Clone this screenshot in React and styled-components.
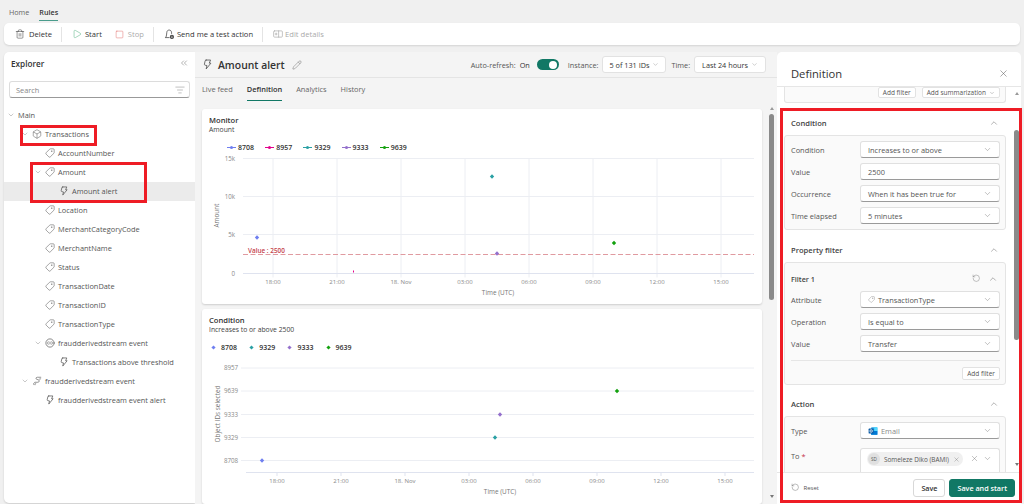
import React from "react";
import styled, {createGlobalStyle} from "styled-components";
import {Trash2, Play, Square, Pencil, Tag, ChevronDown, ChevronUp, X, ChevronsLeft, ListFilter, RotateCcw, Box} from "lucide-react";

const GlobalStyle = createGlobalStyle`
  html, body {
    margin: 0;
    padding: 0;
    height: 504px;
    overflow: hidden;
    background: #f0f0f0;
    font-family: "Open Sans", "Noto Sans", sans-serif;
    color: #333;
  }
`;

const Page = styled.div`
  position: relative;
  width: 1024px;
  height: 504px;
  overflow: hidden;
  display: flex;
  flex-direction: column;
`;

const TopTabs = styled.div`
  display: flex;
  gap: 10px;
  height: 23px;
  padding: 5px 0 0 9px;
  box-sizing: border-box;
  font-size: 7.2px;
`;

const TopTab = styled.div`
  height: 16px;
  line-height: 14px;
  box-sizing: border-box;
  color: ${p => (p.$active ? "#333" : "#666")};
  font-weight: ${p => (p.$active ? 600 : 400)};
  border-bottom: ${p => (p.$active ? "1.5px solid #4a9c8c" : "none")};
`;

const Toolbar = styled.div`
  margin: 0 4px;
  height: 22px;
  background: #fff;
  border-radius: 5px;
  display: flex;
  align-items: center;
  padding-left: 11px;
  font-size: 7.6px;
  box-shadow: 0 1px 2px rgba(0, 0, 0, 0.12);
`;

const ToolButton = styled.div`
  display: flex;
  align-items: center;
  gap: ${p => p.$iconGap || 3}px;
  margin-right: ${p => p.$gap || 0}px;
  color: ${p => (p.$disabled ? "#aaa" : "#333")};
  font-weight: 500;
`;

const ToolDivider = styled.div`
  width: 1px;
  height: 15px;
  background: #e4e4e4;
  margin: 0 10px 0 9px;
`;

const Workspace = styled.div`
  flex: 1;
  display: flex;
  margin: 7px 3px 0 4px;
  min-height: 0;
`;

const Explorer = styled.div`
  width: 191px;
  background: #fff;
  border-radius: 5px 0 0 5px;
  box-shadow: 0 1px 2px rgba(0, 0, 0, 0.15);
  margin-bottom: 1px;
  flex-shrink: 0;
`;

const ExplorerHead = styled.div`
  display: flex;
  justify-content: space-between;
  align-items: center;
  height: 22px;
  padding: 0 6px 0 7px;
  font-size: 8.2px;
  font-weight: 600;
`;

const SearchBox = styled.div`
  margin: 7px 5px 0;
  height: 17px;
  border: 1px solid #dcdcdc;
  border-bottom-color: #999;
  border-radius: 3px;
  box-sizing: border-box;
  display: flex;
  justify-content: space-between;
  align-items: center;
  padding: 0 4px 0 6px;
  font-size: 7.4px;
  color: #888;
`;

const Tree = styled.div`
  margin-top: 7.5px;
  display: flex;
  flex-direction: column;
`;

const TreeRow = styled.div`
  height: 19px;
  display: flex;
  align-items: center;
  padding-left: ${p => p.$indent}px;
  gap: 3px;
  font-size: 7.4px;
  color: #555;
  background: ${p => (p.$selected ? "#ebebeb" : "transparent")};
  white-space: nowrap;
`;

const TreeChevron = styled.span`
  display: inline-flex;
  width: 8px;
  color: #777;
`;

const Main = styled.div`
  width: 582px;
  display: flex;
  flex-direction: column;
  flex-shrink: 0;
  background: #f4f4f4;
`;

const MainHead = styled.div`
  height: 25px;
  border-bottom: 1px solid #e4e4e4;
  display: flex;
  align-items: center;
  padding: 0 11px 0 7px;
  font-size: 7.3px;
`;

const AlertTitle = styled.div`
  font-size: 10.4px;
  font-weight: 600;
  margin: 0 7px 0 5px;
  color: #333;
`;

const HeadRight = styled.div`
  margin-left: auto;
  display: flex;
  align-items: center;
  color: #555;
`;

const OnLabel = styled.span`
  font-weight: 500;
  color: #333;
  margin-left: 4px;
`;

const Toggle = styled.div`
  width: 22px;
  height: 11px;
  border-radius: 6px;
  background: #117865;
  margin: 0 9px 0 7px;
  display: flex;
  justify-content: flex-end;
  align-items: center;
  padding-right: 1.5px;
  box-sizing: border-box;
`;

const ToggleKnob = styled.div`
  width: 8px;
  height: 8px;
  border-radius: 50%;
  background: #fff;
`;

const HeadSelect = styled.div`
  height: 17px;
  padding: 0 ${p => (p.$last ? 7 : 6)}px;
  margin: 0 ${p => (p.$last ? 0 : 5)}px 0 4px;
  display: flex;
  align-items: center;
  gap: 3px;
  background: #fff;
  border: 1px solid #e2e2e2;
  border-radius: 3px;
  box-sizing: border-box;
  font-weight: 500;
  color: #333;
`;

const MainTabs = styled.div`
  display: flex;
  gap: 14px;
  height: 26px;
  padding: 3px 0 0 7px;
  box-sizing: border-box;
  font-size: 7.4px;
`;

const MainTab = styled.div`
  height: 20px;
  line-height: 17px;
  box-sizing: border-box;
  color: ${p => (p.$active ? "#333" : "#666")};
  font-weight: ${p => (p.$active ? 600 : 400)};
  border-bottom: ${p => (p.$active ? "1.5px solid #117865" : "none")};
`;

const ChartArea = styled.div`
  display: flex;
  flex: 1;
  min-height: 0;
  padding: 5px 0 0 7px;
  gap: 7px;
`;

const Cards = styled.div`
  width: 560px;
  display: flex;
  flex-direction: column;
  gap: 5px;
`;

const Card = styled.div`
  flex: 1;
  background: #fff;
  border-radius: 3px;
  box-shadow: 0 1px 2px rgba(0, 0, 0, 0.16);
  padding: 6px 0 0 7px;
  box-sizing: border-box;
  min-height: 0;
  overflow: hidden;
`;

const CardTitle = styled.div`
  font-size: 7.6px;
  font-weight: 600;
  line-height: 10px;
  color: #333;
`;

const CardSub = styled.div`
  font-size: 6.8px;
  line-height: 10px;
  color: #444;
`;

const Legend = styled.div`
  display: flex;
  margin: 7.5px 0 0 ${p => p.$offset}px;
  height: 10px;
`;

const LegendItem = styled.div`
  width: 38.2px;
  display: flex;
  align-items: center;
  gap: ${p => (p.$dot ? "6px" : "2px")};
  font-size: 7px;
  font-weight: 600;
  color: #333;
`;

const LegendDot = styled.span`
  display: inline-block;
  width: 3px;
  height: 3px;
  transform: rotate(45deg);
  background: ${p => p.$color};
`;

const LegendLine = styled.span`
  position: relative;
  display: inline-block;
  width: 9px;
  height: 1px;
  background: ${p => p.$color};

  &::after {
    content: "";
    position: absolute;
    left: 3px;
    top: -1px;
    width: 3px;
    height: 3px;
    border-radius: 50%;
    background: ${p => p.$color};
  }
`;

const ChartSvg = styled.svg`
  display: block;
  margin-left: -7px;
  font-family: "Open Sans", "Noto Sans", sans-serif;
`;

const ScrollTrack = styled.div`
  position: relative;
  width: 5px;
  margin-top: -2px;
  margin-bottom: 6px;
`;

const PanelScroll = styled(ScrollTrack)`
  position: absolute;
  right: 2px;
  top: 5px;
  margin: 0;
  height: 374px;
`;

const ScrollThumb = styled.div`
  position: absolute;
  left: 0;
  right: 0;
  top: ${p => p.$top}px;
  height: ${p => p.$height}px;
  background: #8a8a8a;
  border-radius: 3px;
`;

const ScrollArrow = styled.div`
  position: absolute;
  left: 0.5px;
  ${p => (p.$down ? "bottom: 0;" : "top: 0;")}
  width: 0;
  height: 0;
  border-left: 2px solid transparent;
  border-right: 2px solid transparent;
  ${p => (p.$down ? "border-top: 3px solid #777;" : "border-bottom: 3px solid #999;")}
`;

const Panel = styled.div`
  flex: 1;
  background: #fff;
  border-radius: 5px 5px 0 0;
  display: flex;
  flex-direction: column;
  min-width: 0;
  overflow: hidden;
`;

const PanelHead = styled.div`
  height: 35px;
  flex-shrink: 0;
  border-bottom: 1px solid #e6e6e6;
  box-sizing: border-box;
  display: flex;
  justify-content: space-between;
  align-items: center;
  padding: 9px 12px 0 14px;
  font-size: 11.2px;
  font-weight: 500;
  color: #333;
`;

const PanelBody = styled.div`
  position: relative;
  flex: 1;
  min-height: 0;
  overflow: hidden;
  padding: 0 0 0 7px;
`;

const PanelFoot = styled.div`
  height: 32px;
  flex-shrink: 0;
  border-top: 1px solid #e6e6e6;
  box-sizing: border-box;
  display: flex;
  align-items: center;
  padding: 0 6px 2px 14px;
  gap: 4px;
`;

const ResetButton = styled.div`
  display: flex;
  align-items: center;
  gap: 4px;
  font-size: 6px;
  color: #555;
  margin-right: auto;
`;

const FootButton = styled.div`
  height: 18px;
  display: flex;
  align-items: center;
  justify-content: center;
  border-radius: 3px;
  box-sizing: border-box;
  font-size: 7.2px;
  font-weight: 600;
  padding: 0 7px;
  color: ${p => (p.$primary ? "#fff" : "#333")};
  background: ${p => (p.$primary ? "#117865" : "#fff")};
  border: 1px solid ${p => (p.$primary ? "#117865" : "#d8d8d8")};
`;

const Group = styled.div`
  width: 222px;
  box-sizing: border-box;
  background: #fafafa;
  border: 1px solid #e4e4e4;
  border-radius: 3px;
  padding: ${p => p.$padding || "5px 5px 5px 6px"};
  display: flex;
  flex-direction: column;
  gap: ${p => p.$gap || "5px"};
`;

const TopFragment = styled(Group)`
  height: 16px;
  border-top: none;
  border-radius: 0 0 3px 3px;
  padding: 0 5px 0 0;
  flex-direction: row;
  justify-content: flex-end;
  gap: 6px;
`;

const MiniButton = styled.div`
  height: ${p => p.$height || 11}px;
  padding: 0 4px;
  display: flex;
  align-items: center;
  gap: 3px;
  background: #fff;
  border: 1px solid #e2e2e2;
  border-radius: 2px;
  box-sizing: border-box;
  font-size: 6.5px;
  color: #555;
`;

const SectionHead = styled.div`
  height: ${p => p.$height}px;
  width: 222px;
  box-sizing: border-box;
  display: flex;
  justify-content: space-between;
  align-items: center;
  padding: ${p => p.$pad} 7px 0 7px;
  font-size: 7.6px;
  font-weight: 600;
  color: #444;
`;

const FieldRow = styled.div`
  display: flex;
  align-items: ${p => (p.$top ? "flex-start" : "center")};
  justify-content: space-between;
  font-size: 7.4px;
  color: #555;
`;

const FieldLabel = styled.span`
  color: #555;
  ${p => p.$top && "margin-top: 3px;"}
`;

const Required = styled.span`
  color: #c4314b;
`;

const Select = styled.div`
  width: 140px;
  height: ${p => p.$height || 17}px;
  background: #fff;
  border: 1px solid #e0e0e0;
  border-bottom-color: #9a9a9a;
  border-radius: 3px;
  box-sizing: border-box;
  display: flex;
  align-items: ${p => (p.$top ? "flex-start" : "center")};
  justify-content: space-between;
  padding: ${p => (p.$top ? "3px" : "0")} 7px 0;
  font-size: 7.4px;
  color: ${p => (p.$muted ? "#888" : "#555")};
`;

const SelectValue = styled.span`
  display: flex;
  align-items: center;
  gap: 3px;
`;

const FilterHead = styled.div`
  display: flex;
  justify-content: space-between;
  align-items: center;
  height: 15px;
  padding-right: 2px;
  font-size: 7.2px;
  font-weight: 600;
  color: #444;
`;

const FilterIcons = styled.div`
  display: flex;
  align-items: center;
  gap: 8px;
  color: #666;
`;

const Divider = styled.div`
  height: 1px;
  background: #e6e6e6;
  margin-top: 3px;
`;

const FilterFoot = styled.div`
  display: flex;
  justify-content: flex-end;
  margin-top: 1px;
`;

const Chip = styled.div`
  display: flex;
  align-items: center;
  gap: 4px;
  height: 14px;
  margin-left: -1px;
  padding: 0 3px 0 1px;
  background: #f0f0f0;
  border-radius: 7px;
  font-size: 6.4px;
  color: #555;
  white-space: nowrap;
`;

const Avatar = styled.span`
  width: 12px;
  height: 12px;
  border-radius: 50%;
  background: #e0e0e0;
  display: flex;
  align-items: center;
  justify-content: center;
  font-size: 4.6px;
  color: #555;
`;

const ToTools = styled.div`
  display: flex;
  align-items: center;
  gap: 4px;
  margin-top: 2px;
  color: #666;
`;

const MirrorTag = styled(Tag)`
  transform: scaleX(-1);
  flex-shrink: 0;
`;

const RedBox = styled.div`
  position: absolute;
  left: ${p => p.$x}px;
  top: ${p => p.$y}px;
  width: ${p => p.$w}px;
  height: ${p => p.$h}px;
  border: 3px solid #ee1c25;
  box-sizing: border-box;
  pointer-events: none;
`;

const AlertIcon = ({size = 10}) => (
  <svg width={size} height={size} viewBox="0 0 16 16" fill="none" stroke="#555" strokeWidth="1.2" strokeLinejoin="round" strokeLinecap="round">
    <path d="M6 1.500h6.500L10.500 6H13l-7 8.500L7.200 9.500 4.500 9C3.700 8.800 3.300 8.200 3.500 7.500l1-4.500C4.700 2 5.200 1.500 6 1.500z" />
  </svg>
);

const EventIcon = () => (
  <svg width="10" height="10" viewBox="0 0 16 16" fill="none" stroke="#555" strokeWidth="1.1" strokeLinecap="round">
    <circle cx="8" cy="8" r="6.600" />
    <path d="M5 6c-1 1.200-1 2.800 0 4M11 6c1 1.200 1 2.800 0 4M8 6.500v3" />
  </svg>
);

const StreamIcon = () => (
  <svg width="10" height="10" viewBox="0 0 16 16" fill="none" stroke="#666" strokeWidth="1.1" strokeLinecap="round">
    <path d="M14 2H8.500C6 2 5.500 5 8 5.500l2 .5c2.500.5 2 4-.5 4H6" />
    <path d="M12 5c.8 0 1.600-.2 2-.5M3 14c-1-2 0-4 2-4" />
    <path d="M5 14c-.6-1 0-2 1-2" />
  </svg>
);

const EditDetailsIcon = () => (
  <svg width="10" height="10" viewBox="0 0 16 16" fill="none" stroke="#aaa" strokeWidth="1.1" strokeLinecap="round">
    <rect x="1" y="3" width="14" height="10" rx="1.500" />
    <path d="M9 3v10M3.500 8h3M5 6.500v3" />
  </svg>
);

const TestIcon = () => (
  <svg width="11" height="11" viewBox="0 0 16 16" fill="none" stroke="#444" strokeWidth="1.1" strokeLinecap="round" strokeLinejoin="round">
    <path d="M3 11.500C3.600 9.500 4 8 4 5.500 4 3 5.500 1.500 7.500 1.500S11 3 11 5.500v1" />
    <path d="M2 12.500h5.500" />
    <circle cx="11.500" cy="11.500" r="2.300" strokeWidth="1.500" />
    <circle cx="11.500" cy="11.500" r=".6" fill="#444" />
  </svg>
);

const OutlookIcon = () => (
  <svg width="10" height="10" viewBox="0 0 16 16">
    <rect x="5" y="2" width="10" height="12" rx="1" fill="#28a8ea" />
    <rect x="10" y="2" width="5" height="6" fill="#50d9ff" />
    <rect x="5" y="8" width="10" height="6" fill="#0078d4" />
    <rect x="1" y="4" width="8" height="8" rx="1" fill="#0f5fa8" />
    <circle cx="5" cy="8" r="2" fill="none" stroke="#fff" strokeWidth="1.200" />
  </svg>
);

const SmallTag = () => <MirrorTag size={10} strokeWidth={1.3} color="#555" />;

const colors = {8708: "#6f7ff0", 8957: "#e3008c", 9329: "#2aa0a4", 9333: "#9470cc", 9639: "#13a10e"};

const hours = [
  ["18:00", 71], ["21:00", 135], ["18. Nov", 199], ["03:00", 263],
  ["06:00", 327], ["09:00", 391], ["12:00", 455], ["15:00", 519],
];

// small diamond used for the data points
const Marker = ({x, y, id}) => (
  <path d={`M${x} ${y - 2.2}L${x + 2.2} ${y}L${x} ${y + 2.2}L${x - 2.2} ${y}Z`} fill={colors[id]} />
);

const Monitor = () => (
  <ChartSvg width="559" height="150" viewBox="0 151.500 559 150">
    {[157, 195, 233].map(y => <line key={y} x1="41" x2="552" y1={y} y2={y} stroke="#eceef3" strokeWidth="1" />)}
    {hours.map(([h, x]) => <line key={h} x1={x} x2={x} y1="157" y2="276" stroke="#eceef3" strokeWidth="1" />)}
    <line x1="41" x2="552" y1="272" y2="272" stroke="#dfe3ef" strokeWidth="1" />
    <line x1="41" x2="552" y1="253" y2="253" stroke="#e09aa0" strokeWidth="1" strokeDasharray="5 2.500" />
    {[["15k", 159], ["10k", 197], ["5k", 235], ["0", 274]].map(([t, y]) => (
      <text key={t} x="33" y={y} fontSize="6.200" fill="#888" textAnchor="end">{t}</text>
    ))}
    <text transform="translate(17 214) rotate(-90)" fontSize="6.400" fill="#777" textAnchor="middle">Amount</text>
    {hours.map(([h, x]) => <text key={h} x={x} y="282.500" fontSize="6" fill="#888" textAnchor="middle">{h}</text>)}
    <text x="296" y="293.500" fontSize="6.400" fill="#777" textAnchor="middle">Time (UTC)</text>
    <text x="46" y="251" fontSize="6.400" fontWeight="600" fill="#c4414b">Value : 2500</text>
    <Marker x={55} y={236} id={8708} />
    <rect x="151" y="269" width="1" height="2" fill={colors[8957]} />
    <Marker x={290} y={175} id={9329} />
    <Marker x={295} y={252} id={9333} />
    <Marker x={412} y={241.5} id={9639} />
  </ChartSvg>
);

const ConditionChart = () => (
  <ChartSvg width="559" height="147" viewBox="0 352 559 147">
    {[[8957, 367], [9639, 390], [9333, 413.5], [9329, 436.5], [8708, 459.5]].map(([id, y]) => (
      <g key={id}>
        <line x1="39" x2="552" y1={y} y2={y} stroke="#eceef3" strokeWidth="1" />
        <text x="22" y={y + 2} fontSize="6.200" fill="#888">{id}</text>
      </g>
    ))}
    <line x1="44" x2="552" y1="471.500" y2="471.500" stroke="#dfe3ef" strokeWidth="1" />
    {hours.map(([h, x]) => <line key={h} x1={x + 4} x2={x + 4} y1="471.500" y2="475" stroke="#dfe3ef" strokeWidth="1" />)}
    {hours.map(([h, x]) => <text key={h} x={x + 4} y="482" fontSize="6" fill="#888" textAnchor="middle">{h}</text>)}
    <text x="298" y="493" fontSize="6.400" fill="#777" textAnchor="middle">Time (UTC)</text>
    <text transform="translate(17.500 413) rotate(-90)" fontSize="6.400" fill="#777" textAnchor="middle">Object IDs selected</text>
    <Marker x={60} y={459.5} id={8708} />
    <Marker x={293} y={436.5} id={9329} />
    <Marker x={298} y={413.5} id={9333} />
    <Marker x={415} y={390} id={9639} />
  </ChartSvg>
);

const Chevron = ({size = 9}) => <ChevronDown size={size} strokeWidth={1.2} color="#777" />;
const Up = ({size = 10}) => <ChevronUp size={size} strokeWidth={1.2} color="#666" />;

const treeRows = [
  {label: "Main", indent: 3, chevron: true},
  {label: "Transactions", indent: 17, chevron: true, icon: <Box size={10} strokeWidth={1.2} color="#555" />},
  {label: "AccountNumber", indent: 41, icon: <SmallTag />},
  {label: "Amount", indent: 30, chevron: true, icon: <SmallTag />},
  {label: "Amount alert", indent: 55, icon: <AlertIcon />, selected: true},
  {label: "Location", indent: 41, icon: <SmallTag />},
  {label: "MerchantCategoryCode", indent: 41, icon: <SmallTag />},
  {label: "MerchantName", indent: 41, icon: <SmallTag />},
  {label: "Status", indent: 41, icon: <SmallTag />},
  {label: "TransactionDate", indent: 41, icon: <SmallTag />},
  {label: "TransactionID", indent: 41, icon: <SmallTag />},
  {label: "TransactionType", indent: 41, icon: <SmallTag />},
  {label: "fraudderivedstream event", indent: 30, chevron: true, icon: <EventIcon />},
  {label: "Transactions above threshold", indent: 55, icon: <AlertIcon />},
  {label: "fraudderivedstream event", indent: 17, chevron: true, icon: <StreamIcon />},
  {label: "fraudderivedstream event alert", indent: 41, icon: <AlertIcon />},
];

const App = () => {
  return (
    <Page>
      <GlobalStyle />
      <TopTabs>
        <TopTab>Home</TopTab>
        <TopTab $active>Rules</TopTab>
      </TopTabs>
      <Toolbar>
        <ToolButton $iconGap={4}><Trash2 size={10} strokeWidth={1.2} />Delete</ToolButton>
        <ToolDivider />
        <ToolButton $gap={13}><Play size={10} strokeWidth={1.2} color="#4caf7d" />Start</ToolButton>
        <ToolButton $disabled $iconGap={4}><Square size={9} strokeWidth={1.2} color="#e0605f" />Stop</ToolButton>
        <ToolDivider />
        <ToolButton $iconGap={2}><TestIcon />Send me a test action</ToolButton>
        <ToolDivider />
        <ToolButton $disabled $iconGap={2}><EditDetailsIcon />Edit details</ToolButton>
      </Toolbar>
      <Workspace>
        <Explorer>
          <ExplorerHead>Explorer<ChevronsLeft size={10} strokeWidth={1.2} color="#666" /></ExplorerHead>
          <SearchBox>Search<ListFilter size={10} strokeWidth={1.1} color="#777" /></SearchBox>
          <Tree>
            {treeRows.map((row, i) => (
              <TreeRow key={i} $indent={row.indent} $selected={row.selected}>
                {row.chevron && <TreeChevron><ChevronDown size={8} strokeWidth={1.2} /></TreeChevron>}
                {row.icon}
                {row.label}
              </TreeRow>
            ))}
          </Tree>
        </Explorer>
        <Main>
          <MainHead>
            <AlertIcon size={11} />
            <AlertTitle>Amount alert</AlertTitle>
            <Pencil size={10} strokeWidth={1.1} color="#666" />
            <HeadRight>
              Auto-refresh:<OnLabel>On</OnLabel>
              <Toggle><ToggleKnob /></Toggle>
              Instance:
              <HeadSelect>5 of 131 IDs <Chevron size={7} /></HeadSelect>
              Time:
              <HeadSelect $last>Last 24 hours <Chevron size={7} /></HeadSelect>
            </HeadRight>
          </MainHead>
          <MainTabs>
            <MainTab>Live feed</MainTab>
            <MainTab $active>Definition</MainTab>
            <MainTab>Analytics</MainTab>
            <MainTab>History</MainTab>
          </MainTabs>
          <ChartArea>
            <Cards>
              <Card>
                <CardTitle>Monitor</CardTitle>
                <CardSub>Amount</CardSub>
                <Legend $offset={18}>
                  {[8708, 8957, 9329, 9333, 9639].map(id => (
                    <LegendItem key={id}><LegendLine $color={colors[id]} />{id}</LegendItem>
                  ))}
                </Legend>
                <Monitor />
              </Card>
              <Card>
                <CardTitle>Condition</CardTitle>
                <CardSub>Increases to or above 2500</CardSub>
                <Legend $offset={3}>
                  {[8708, 9329, 9333, 9639].map(id => (
                    <LegendItem key={id} $dot><LegendDot $color={colors[id]} />{id}</LegendItem>
                  ))}
                </Legend>
                <ConditionChart />
              </Card>
            </Cards>
            <ScrollTrack>
              <ScrollArrow />
              <ScrollThumb $top={7} $height={186} />
              <ScrollArrow $down />
            </ScrollTrack>
          </ChartArea>
        </Main>
        <Panel>
          <PanelHead>Definition<X size={11} strokeWidth={1.1} color="#555" /></PanelHead>
          <PanelBody>
            <TopFragment>
              <MiniButton>Add filter</MiniButton>
              <MiniButton>Add summarization <ChevronDown size={6} strokeWidth={1.2} /></MiniButton>
            </TopFragment>
            <SectionHead $height={32} $pad="8px">Condition<Up /></SectionHead>
            <Group>
              <FieldRow><FieldLabel>Condition</FieldLabel><Select>Increases to or above<Chevron /></Select></FieldRow>
              <FieldRow><FieldLabel>Value</FieldLabel><Select>2500</Select></FieldRow>
              <FieldRow><FieldLabel>Occurrence</FieldLabel><Select>When it has been true for<Chevron /></Select></FieldRow>
              <FieldRow><FieldLabel>Time elapsed</FieldLabel><Select>5 minutes<Chevron /></Select></FieldRow>
            </Group>
            <SectionHead $height={32} $pad="7px">Property filter<Up /></SectionHead>
            <Group $padding="8px 5px 4px 6px">
              <FilterHead>Filter 1<FilterIcons><RotateCcw size={8.5} strokeWidth={1.1} /><Up /></FilterIcons></FilterHead>
              <FieldRow><FieldLabel>Attribute</FieldLabel><Select><SelectValue><MirrorTag size={7} strokeWidth={1} />TransactionType</SelectValue><Chevron /></Select></FieldRow>
              <FieldRow><FieldLabel>Operation</FieldLabel><Select>Is equal to<Chevron /></Select></FieldRow>
              <FieldRow><FieldLabel>Value</FieldLabel><Select>Transfer<Chevron /></Select></FieldRow>
              <Divider />
              <FilterFoot><MiniButton $height={13}>Add filter</MiniButton></FilterFoot>
            </Group>
            <SectionHead $height={31} $pad="7px">Action<Up /></SectionHead>
            <Group $gap="9px">
              <FieldRow><FieldLabel>Type</FieldLabel><Select $muted><SelectValue><OutlookIcon />Email</SelectValue><Chevron /></Select></FieldRow>
              <FieldRow $top>
                <FieldLabel $top>To <Required>*</Required></FieldLabel>
                <Select $height={30} $top>
                  <Chip><Avatar>SD</Avatar>Someleze Diko (BAMI)<X size={7} strokeWidth={1} /></Chip>
                  <ToTools><X size={9} strokeWidth={1} /><Chevron /></ToTools>
                </Select>
              </FieldRow>
            </Group>
            <PanelScroll>
              <ScrollArrow />
              <ScrollThumb $top={38} $height={210} />
              <ScrollArrow $down />
            </PanelScroll>
          </PanelBody>
          <PanelFoot>
            <ResetButton><RotateCcw size={8.5} strokeWidth={1.1} />Reset</ResetButton>
            <FootButton>Save</FootButton>
            <FootButton $primary>Save and start</FootButton>
          </PanelFoot>
        </Panel>
      </Workspace>
      <RedBox $x={20} $y={125} $w={77} $h={21} />
      <RedBox $x={30} $y={162} $w={117} $h={41} />
      <RedBox $x={780} $y={108} $w={242} $h={395} />
    </Page>
  );
};

export default App;
